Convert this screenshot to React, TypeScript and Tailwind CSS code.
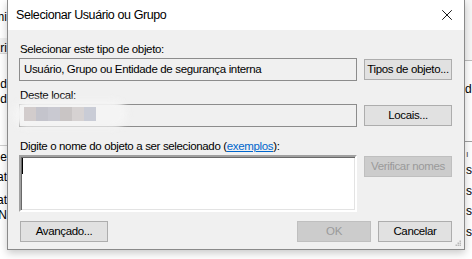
import { X } from 'lucide-react'

const font = "font-['Liberation_Sans',Arial,sans-serif]"
const txt = 'text-[11.5px] tracking-[-0.35px] leading-[15px] text-black'
const btn =
    'h-[21px] border border-[#adadad] bg-[#e1e1e1] flex items-center justify-center text-[11.5px] tracking-[-0.35px] text-black'
const btnOff =
    'h-[21px] border border-[#bfbfbf] bg-[#cccccc] flex items-center justify-center text-[11.5px] tracking-[-0.35px] text-[#9a9a9a]'

// a text fragment of the window behind, clipped at the dialog's left edge
function LeftBit({ top, children }: { top: number; children: string }) {
    return (
        <div
            className="absolute left-0 w-[7px] overflow-hidden flex justify-end whitespace-nowrap"
            style={{ top }}
        >
            {children}
        </div>
    )
}

function BackgroundWindow() {
    return (
        <div className={`absolute inset-0 bg-white text-[12px] text-black ${font}`}>
            <LeftBit top={8}>Admi</LeftBit>
            <div className="absolute left-0 top-[38px] w-[8px] h-[16px] bg-[#f0f0f0] border-b border-[#d9d9d9]" />
            <LeftBit top={39}>ri</LeftBit>
            <LeftBit top={75}>d</LeftBit>
            <LeftBit top={90}>Cd</LeftBit>
            <div className="absolute left-0 top-[145px] w-[8px] h-px bg-[#d0d0d0]" />
            <LeftBit top={148}>Re</LeftBit>
            <LeftBit top={168}>at</LeftBit>
            <LeftBit top={191}>at</LeftBit>
            <LeftBit top={206}>UN</LeftBit>

            <div className="absolute right-0 top-0 w-[9px] h-[61px] bg-[#f7f7f7] border-b border-[#bdbdbd]" />
            <div className="absolute left-[465px] top-[80px]">de</div>
            <div className="absolute right-0 top-[141px] w-[9px] h-px bg-[#a0a0a0]" />
            <div className="absolute left-[466px] top-[148px] text-[9px] text-[#444]">ı</div>
            <div className="absolute left-[466px] top-[161px]">s</div>
            <div className="absolute left-[466px] top-[182px]">s</div>
            <div className="absolute left-[466px] top-[202px]">s</div>
            <div className="absolute left-[466px] top-[223px]">s</div>
        </div>
    )
}

function Grip() {
    const dots = [
        [4, 0],
        [2, 2],
        [4, 2],
        [0, 4],
        [2, 4],
        [4, 4],
    ]
    return (
        <svg width="7" height="7" viewBox="0 0 7 7" className="absolute right-[2px] bottom-[2px]">
            {dots.map(([x, y], i) => (
                <rect key={i} x={x + 0.5} y={y + 0.5} width="1.5" height="1.5" fill="#b9b9b9" />
            ))}
        </svg>
    )
}

export default function App() {
    const blurBlocks = ['#d2cccc', '#c4c4cc', '#c9c9d1', '#c9c5c5', '#d6d2d2', '#c9ccd6']

    return (
        <div className={`relative w-[472px] h-[259px] overflow-hidden ${font}`}>
            <BackgroundWindow />

            {/* Dialog */}
            <div className="absolute left-[7px] top-0 w-[458px] flex flex-col border-x border-b border-[#8a8a8a] bg-[#f0f0f0] shadow-[0_3px_8px_rgba(0,0,0,0.22)]">
                {/* Title bar */}
                <div className="h-[30px] bg-white flex items-center justify-between">
                    <span className="pl-[8px] text-[12.5px] tracking-[-0.4px] text-black">Selecionar Usuário ou Grupo</span>
                    <div className="w-[30px] h-[30px] mr-[2px] flex items-center justify-center">
                        <X size={18} strokeWidth={1.2} color="#000" />
                    </div>
                </div>

                {/* Body */}
                <div className="relative flex flex-col pl-[11px] pr-[12px] pt-[12px] pb-[7px]">
                    <div className={`${txt} pl-[1px]`}>Selecionar este tipo de objeto:</div>
                    <div className="mt-[1px] flex items-center gap-[7px]">
                        <div className="w-[338px] h-[23px] border border-[#8c8c8c] bg-[#f0f0f0] flex items-center pl-[4px]">
                            <span className={txt}>Usuário, Grupo ou Entidade de segurança interna</span>
                        </div>
                        <div className={`${btn} w-[88px]`}>Tipos de objeto...</div>
                    </div>

                    <div className={`${txt} pl-[1px] mt-[7px]`}>Deste local:</div>
                    <div className="mt-[1px] flex items-center gap-[7px]">
                        <div className="relative w-[338px] h-[23px] border border-[#8c8c8c] bg-[#f0f0f0]">
                            {/* blurred location */}
                            <div className="absolute left-[-7px] top-[-5px] w-[114px] h-[28px] rounded-full bg-[#f4f4f4] blur-[3px]" />
                            <div className="absolute left-[4px] top-[2px] flex blur-[0.6px]">
                                {blurBlocks.map((c) => (
                                    <div key={c} className="w-[12px] h-[14px]" style={{ background: c }} />
                                ))}
                            </div>
                        </div>
                        <div className={`${btn} w-[88px]`}>Locais...</div>
                    </div>

                    <div className={`${txt} pl-[1px] mt-[12px]`}>
                        Digite o nome do objeto a ser selecionado (
                        <span className="text-[#0066cc] underline">exemplos</span>):
                    </div>
                    <div className="mt-[1px] flex items-start gap-[7px]">
                        <div className="w-[338px] h-[57px] bg-white border-2 border-t-[#a0a0a0] border-l-[#a0a0a0] border-r-white border-b-white shadow-[inset_1px_1px_0_#696969,inset_-1px_-1px_0_#e3e3e3] pl-[1px] pt-[1px]">
                            <div className="w-px h-[16px] bg-black" />
                        </div>
                        <div className={`${btnOff} w-[88px] mt-[1px]`}>Verificar nomes</div>
                    </div>

                    <div className="mt-[9px] flex items-center">
                        <div className={`${btn} w-[88px] ml-[1px]`}>Avançado...</div>
                        <div className="flex-1" />
                        <div className={`${btnOff} w-[74px]`}>OK</div>
                        <div className={`${btn} w-[74px] ml-[7px]`}>Cancelar</div>
                    </div>
                    <Grip />
                </div>
            </div>
        </div>
    )
}
